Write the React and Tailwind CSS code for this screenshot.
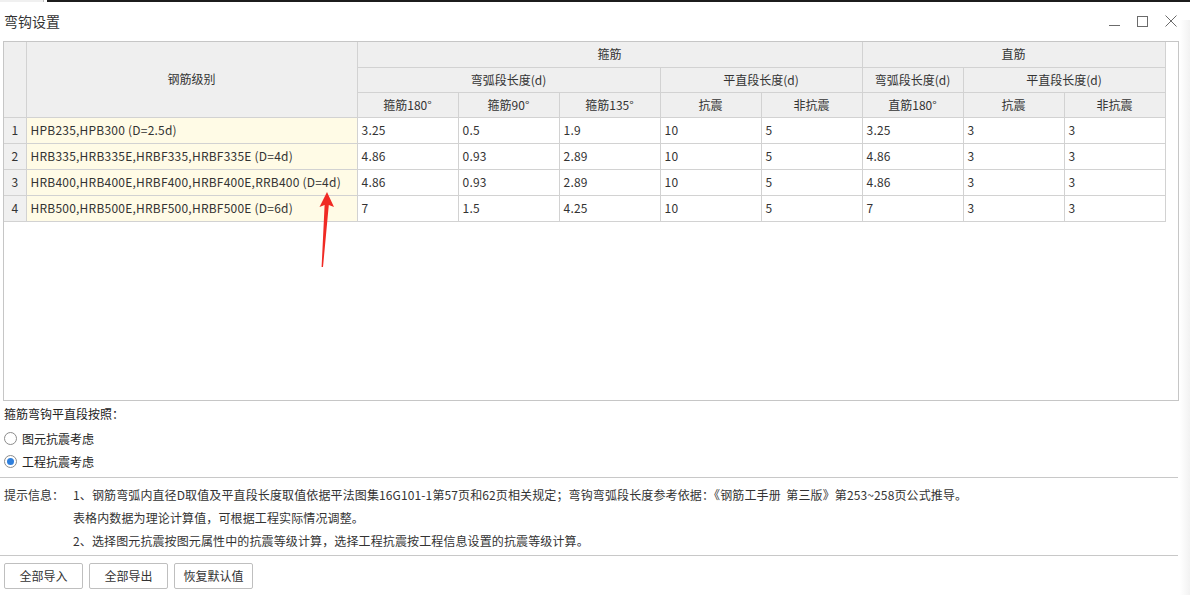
const font = { fontFamily: '"Noto Sans CJK SC", "Noto Sans", sans-serif' };

const rows = [
  ["HPB235,HPB300 (D=2.5d)", "3.25", "0.5", "1.9", "10", "5", "3.25", "3", "3"],
  ["HRB335,HRB335E,HRBF335,HRBF335E (D=4d)", "4.86", "0.93", "2.89", "10", "5", "4.86", "3", "3"],
  ["HRB400,HRB400E,HRBF400,HRBF400E,RRB400 (D=4d)", "4.86", "0.93", "2.89", "10", "5", "4.86", "3", "3"],
  ["HRB500,HRB500E,HRBF500,HRBF500E (D=6d)", "7", "1.5", "4.25", "10", "5", "7", "3", "3"],
];

const th = "border-r border-b border-[#d2d2d2] bg-[#efefef] font-normal text-center text-[12px] text-[#333]";
const td = "border-r border-b border-[#d2d2d2] text-[12px] tracking-[0.22px] text-[#333] pl-[4px] whitespace-nowrap";

function Radio({ checked, label }) {
  return (
    <div className="flex h-[23px] items-center pl-[4px]">
      <span className="flex h-[13px] w-[13px] items-center justify-center rounded-full border border-[#8c8c8c] bg-white">
        {checked && <span className="h-[7px] w-[7px] rounded-full bg-[#2f7fdc]" />}
      </span>
      <span className="ml-[5px] text-[12px] text-[#222]">{label}</span>
    </div>
  );
}

export default function App() {
  return (
    <div className="relative h-[595px] w-[1190px] overflow-hidden bg-white" style={font}>
      {/* window behind */}
      <div className="flex h-[2px]">
        <div className="w-[44px] border-r border-[#bdbdbd] bg-[#f0f0f0]" />
        <div className="ml-[3px] flex-1 bg-[#1c1c1c]" />
      </div>

      {/* title bar */}
      <div className="flex h-[39px] items-center justify-between pb-[1px] pl-[4px] pr-[13px]">
        <span className="text-[14px] text-[#333]">弯钩设置</span>
        <div className="flex items-center gap-[17px] text-[#6b6b6b]">
          <svg width="11" height="11" viewBox="0 0 11 11">
            <path d="M0 9.5h11" stroke="currentColor" strokeWidth="1" />
          </svg>
          <svg width="11" height="11" viewBox="0 0 11 11">
            <rect x="0.5" y="0.5" width="10" height="10" fill="none" stroke="currentColor" strokeWidth="1" />
          </svg>
          <svg width="12" height="12" viewBox="0 0 12 12">
            <path d="M0.5 0.5l11 11M11.5 0.5l-11 11" stroke="currentColor" strokeWidth="1" />
          </svg>
        </div>
      </div>

      {/* table */}
      <div className="ml-[3px] h-[360px] w-[1176px] border border-[#c6c6c6]">
        <table className="table-fixed border-collapse" style={{ width: 1160 }}>
          <colgroup>
            <col style={{ width: 22 }} />
            <col style={{ width: 331 }} />
            {Array.from({ length: 8 }).map((_, i) => (
              <col key={i} style={{ width: 101 }} />
            ))}
          </colgroup>
          <thead>
            <tr className="h-[25px]">
              <th rowSpan={3} className={th} />
              <th rowSpan={3} className={th}>钢筋级别</th>
              <th colSpan={5} className={th}>箍筋</th>
              <th colSpan={3} className={th}>直筋</th>
            </tr>
            <tr className="h-[25px]">
              <th colSpan={3} className={th}>弯弧段长度(d)</th>
              <th colSpan={2} className={th}>平直段长度(d)</th>
              <th className={th}>弯弧段长度(d)</th>
              <th colSpan={2} className={th}>平直段长度(d)</th>
            </tr>
            <tr className="h-[25px]">
              <th className={th}>箍筋180°</th>
              <th className={th}>箍筋90°</th>
              <th className={th}>箍筋135°</th>
              <th className={th}>抗震</th>
              <th className={th}>非抗震</th>
              <th className={th}>直筋180°</th>
              <th className={th}>抗震</th>
              <th className={th}>非抗震</th>
            </tr>
          </thead>
          <tbody>
            {rows.map((r, i) => (
              <tr key={i} className="h-[26px]">
                <td className="border-r border-b border-[#d2d2d2] bg-[#f0f0f0] text-center text-[12px] text-[#333]">{i + 1}</td>
                {r.map((c, j) => (
                  <td key={j} className={td + (j === 0 ? " bg-[#fffbe6]" : "")}>{c}</td>
                ))}
              </tr>
            ))}
          </tbody>
        </table>
      </div>

      {/* radio options */}
      <div className="flex h-[26px] items-center pl-[4px] text-[12px] text-[#222]">箍筋弯钩平直段按照：</div>
      <Radio label="图元抗震考虑" />
      <Radio checked label="工程抗震考虑" />

      {/* hints */}
      <div className="mt-[4px] w-[1178px] border-t border-[#c8c8c8] pt-[5px] text-[12px] tracking-[0.12px] text-[#333]">
        <div className="flex h-[23px] items-center whitespace-nowrap">
          <span className="w-[73px] shrink-0 pl-[4px] tracking-normal">提示信息：</span>
          <span>1、钢筋弯弧内直径D取值及平直段长度取值依据平法图集16G101-1第57页和62页相关规定；弯钩弯弧段长度参考依据：《钢筋工手册&nbsp;&nbsp;第三版》第253~258页公式推导。</span>
        </div>
        <div className="flex h-[23px] items-center whitespace-nowrap pl-[73px]">表格内数据为理论计算值，可根据工程实际情况调整。</div>
        <div className="flex h-[23px] items-center whitespace-nowrap pl-[73px]">2、选择图元抗震按图元属性中的抗震等级计算，选择工程抗震按工程信息设置的抗震等级计算。</div>
      </div>

      {/* buttons */}
      <div className="mt-[3px] w-[1178px] border-t border-[#c8c8c8] pt-[7px]">
        <div className="flex gap-[6px] pl-[4px]">
          {["全部导入", "全部导出", "恢复默认值"].map((b) => (
            <button key={b} className="h-[26px] w-[79px] rounded-[2px] border border-[#bfbfbf] bg-white text-[12px] text-[#333]">
              {b}
            </button>
          ))}
        </div>
      </div>

      {/* right window shadow */}
      <div className="absolute right-0 top-[20px] h-[575px] w-[10px] bg-gradient-to-r from-white to-[#f2f2f2]" />

      {/* red annotation arrow */}
      <svg className="absolute left-0 top-0" width="1190" height="595">
        <polygon points="327,192 334,207 328.8,205 323,267 321.6,267 324.6,205 319.5,207" fill="#f02a24" />
      </svg>
    </div>
  );
}
